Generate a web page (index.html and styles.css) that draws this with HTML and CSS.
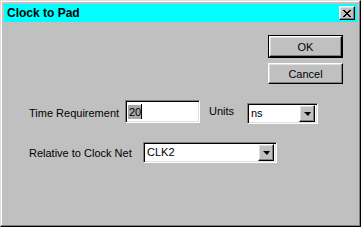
FILE: index.html
```html
<!DOCTYPE html>
<html>
<head>
<meta charset="utf-8">
<link rel="stylesheet" href="styles.css">
</head>
<body>
<div class="window">
  <div class="titlebar">
    <span class="title">Clock to Pad</span>
    <button class="close" aria-label="Close">
      <svg width="8" height="7" viewBox="0 0 8 7" shape-rendering="crispEdges">
        <path d="M0 0h2v1h-2zM6 0h2v1h-2zM1 1h2v1h-2zM5 1h2v1h-2zM2 2h4v1h-4zM3 3h2v1h-2zM2 4h4v1h-4zM1 5h2v1h-2zM5 5h2v1h-2zM0 6h2v1h-2zM6 6h2v1h-2z" fill="#000"/>
      </svg>
    </button>
  </div>
  <div class="content">
    <div class="actions">
      <div class="default-ring"><button class="btn">OK</button></div>
      <button class="btn cancel">Cancel</button>
    </div>
    <div class="form">
      <div class="row row-time">
        <span class="label label-time">Time Requirement</span>
        <div class="field"><span class="sel">20</span><span class="caret"></span></div>
        <span class="label label-units">Units</span>
        <div class="combo combo-units">
          <span class="combo-text">ns</span>
          <span class="drop"><span class="arrow"></span></span>
        </div>
      </div>
      <div class="row row-clock">
        <span class="label label-clock">Relative to Clock Net</span>
        <div class="combo combo-clock">
          <span class="combo-text">CLK2</span>
          <span class="drop"><span class="arrow"></span></span>
        </div>
      </div>
    </div>
  </div>
</div>
</body>
</html>
```

FILE: styles.css
```css
* { box-sizing: border-box; }
html, body { margin: 0; padding: 0; background: #fff; }
body { font-family: "Liberation Sans", Arial, sans-serif; font-size: 11px; color: #000; }

.window {
  width: 361px;
  height: 227px;
  background: #c0c0c0;
  border: 1px solid;
  border-color: #dfdfdf #000 #000 #dfdfdf;
  box-shadow: inset -1px -1px #808080, inset 1px 1px #fff;
  padding: 3px;
  display: flex;
  flex-direction: column;
}

.titlebar {
  height: 18px;
  background: #00ffff;
  display: flex;
  align-items: center;
  justify-content: space-between;
  padding: 0 2px 0 3px;
}
.title { font-weight: bold; font-size: 12px; letter-spacing: 0; }

.close {
  width: 16px;
  height: 14px;
  padding: 0;
  margin: 0;
  background: #c0c0c0;
  border: 1px solid;
  border-color: #fff #000 #000 #fff;
  box-shadow: inset -1px -1px #808080, inset 1px 1px #dfdfdf;
  display: flex;
  align-items: center;
  justify-content: center;
}
.close svg { display: block; margin-left: -1px; }

.content {
  flex: 1;
  display: flex;
  flex-direction: column;
  padding: 13px 14px 0 25px;
}

.actions {
  align-self: flex-end;
  display: flex;
  flex-direction: column;
  gap: 5px;
}
.default-ring { border: 1px solid #000; width: 75px; height: 23px; }
.btn {
  display: block;
  width: 75px;
  height: 22px;
  margin: 0;
  padding: 0;
  font-family: inherit;
  font-size: 11px;
  color: #000;
  background: #c0c0c0;
  border: 1px solid;
  border-color: #fff #000 #000 #fff;
  box-shadow: inset -1px -1px #808080, inset 1px 1px #dfdfdf;
}
.default-ring .btn { width: 73px; height: 21px; }
.cancel { height: 21px; }

.form { margin-top: 16px; display: flex; flex-direction: column; gap: 17px; }
.row { display: flex; align-items: flex-start; }

.label { white-space: nowrap; }
.label-time { width: 96px; line-height: 23px; padding-top: 2px; }
.label-units { width: 38px; margin-left: 9px; line-height: 23px; }
.label-clock { width: 114px; line-height: 21px; padding-top: 1px; }

.field {
  width: 75px;
  height: 23px;
  background: #fff;
  border: 1px solid;
  border-color: #808080 #fff #fff #808080;
  box-shadow: inset 1px 1px #000, inset -1px -1px #dfdfdf;
  display: flex;
  align-items: center;
  padding-left: 2px;
}
.sel { background: #a8a8a8; line-height: 14px; padding: 0 0 0 1px; }
.caret { width: 1px; height: 15px; background: #000; }

.combo {
  height: 21px;
  background: #fff;
  border: 1px solid;
  border-color: #808080 #fff #fff #808080;
  box-shadow: inset 1px 1px #000, inset -1px -1px #dfdfdf;
  display: flex;
  align-items: center;
  padding: 2px 2px 2px 3px;
}
.combo-units { width: 71px; margin-top: 3px; }
.combo-clock { width: 134px; }
.combo-text { flex: 1; line-height: 17px; }
.drop {
  width: 16px;
  height: 17px;
  background: #c0c0c0;
  border: 1px solid;
  border-color: #fff #000 #000 #fff;
  box-shadow: inset -1px -1px #808080, inset 1px 1px #dfdfdf;
  display: flex;
  align-items: center;
  justify-content: center;
}
.arrow {
  width: 0;
  height: 0;
  border-left: 4px solid transparent;
  border-right: 3px solid transparent;
  border-top: 4px solid #000;
  margin-top: 1px;
}
```
